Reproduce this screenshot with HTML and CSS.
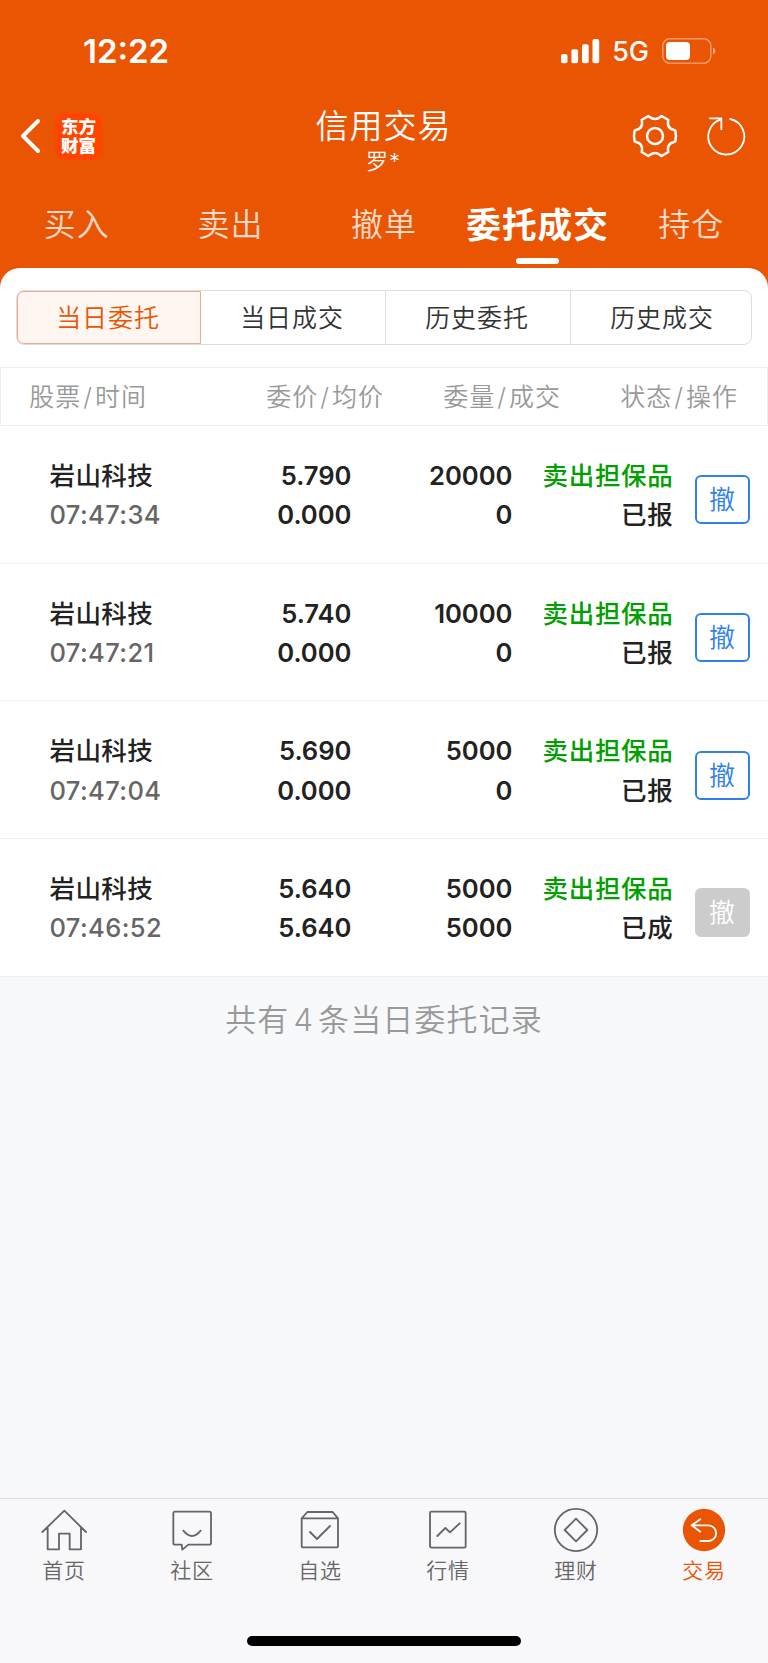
FILE: index.html
```
<!DOCTYPE html>
<html lang="zh-CN">
<head>
    <meta charset="UTF-8">
    <meta name="viewport" content="width=device-width, initial-scale=1.0">
    <title>信用交易</title>
    <link rel="stylesheet" href="styles.css">
</head>
<body>
    <div class="app">
        <header class="header">
            <div class="status-bar">
                <span class="clock">12:22</span>
                <div class="status-icons">
                    <svg class="signal" width="39" height="25" viewBox="0 0 39 25" fill="#fff">
                        <rect x="0" y="15" width="6.5" height="9.3" rx="2"/>
                        <rect x="10.4" y="10.3" width="6.7" height="14" rx="2"/>
                        <rect x="21" y="5.2" width="6.7" height="19" rx="2"/>
                        <rect x="31.5" y="0" width="6.7" height="24.3" rx="2"/>
                    </svg>
                    <span class="network">5G</span>
                    <svg class="battery" width="54" height="26" viewBox="0 0 54 26">
                        <rect x="0.8" y="0.8" width="48" height="24.4" rx="7" fill="none" stroke="#fff" stroke-opacity="0.4" stroke-width="1.5"/>
                        <rect x="4" y="4" width="24" height="18" rx="4" fill="#fff"/>
                        <path d="M51 9.5q5 3.5 0 7z" fill="#fff" fill-opacity="0.5"/>
                    </svg>
                </div>
            </div>

            <div class="nav">
                <div class="nav-left">
                    <svg width="22" height="36" viewBox="0 0 22 36" fill="none" stroke="#fff" stroke-width="4" stroke-linecap="round" stroke-linejoin="round"><path d="M18 3L3 18l15 15"/></svg>
                    <div class="logo">东方<br>财富</div>
                </div>
                <div class="nav-title">
                    <h1>信用交易</h1>
                    <p>罗*</p>
                </div>
                <div class="nav-right">
                    <svg width="46" height="46" viewBox="-69 -69 138 138" fill="none" stroke="#fff" stroke-width="7.5" stroke-linejoin="round">
                        <path d="M-20-60L-17-58Q0-44 17-58L20-60L40-48L39-44Q36-23 57-18L61-16Q65 0 61 16L57 18Q36 23 39 44L40 48L20 60L17 58Q0 44-17 58L-20 60L-40 48L-39 44Q-36 23-57 18L-61 16Q-65 0-61-16L-57-18Q-36-23-39-44L-40-48z"/>
                        <circle r="24"/>
                    </svg>
                    <svg width="42" height="42" viewBox="-63 -63 126 126" fill="none" stroke="#fff" stroke-width="5.5" stroke-linecap="round">
                        <path d="M13-51A54 54 0 1 1-15-50M-48-53H-14V-20"/>
                    </svg>
                </div>
            </div>

            <nav class="tabs">
                <a class="tab">买入</a>
                <a class="tab">卖出</a>
                <a class="tab">撤单</a>
                <a class="tab active">委托成交</a>
                <a class="tab">持仓</a>
            </nav>
        </header>

        <main class="sheet">
            <div class="segment">
                <div class="segment-item active">当日委托</div>
                <div class="segment-item">当日成交</div>
                <div class="segment-item">历史委托</div>
                <div class="segment-item">历史成交</div>
            </div>

            <div class="list-head">
                <span>股票<i>/</i>时间</span>
                <span>委价<i>/</i>均价</span>
                <span>委量<i>/</i>成交</span>
                <span>状态<i>/</i>操作</span>
            </div>

            <div class="order">
                <div class="stock">岩山科技<br><span class="time">07:47:34</span></div>
                <div class="num">5.790<br>0.000</div>
                <div class="num">20000<br>0</div>
                <div class="state"><span class="sell">卖出担保品</span><br>已报</div>
                <button class="cancel">撤</button>
            </div>
            <div class="order">
                <div class="stock">岩山科技<br><span class="time">07:47:21</span></div>
                <div class="num">5.740<br>0.000</div>
                <div class="num">10000<br>0</div>
                <div class="state"><span class="sell">卖出担保品</span><br>已报</div>
                <button class="cancel">撤</button>
            </div>
            <div class="order">
                <div class="stock">岩山科技<br><span class="time">07:47:04</span></div>
                <div class="num">5.690<br>0.000</div>
                <div class="num">5000<br>0</div>
                <div class="state"><span class="sell">卖出担保品</span><br>已报</div>
                <button class="cancel">撤</button>
            </div>
            <div class="order">
                <div class="stock">岩山科技<br><span class="time">07:46:52</span></div>
                <div class="num">5.640<br>5.640</div>
                <div class="num">5000<br>5000</div>
                <div class="state"><span class="sell">卖出担保品</span><br>已成</div>
                <button class="cancel disabled" disabled>撤</button>
            </div>
        </main>

        <p class="summary">共有<span>4</span>条当日委托记录</p>

        <footer class="footer">
            <div class="menu">
                <a class="menu-item">
                    <svg viewBox="0 0 138 138"><path d="M4 75L70 11l65 64M20 62V127H54V80H86V127H120V62"/></svg>
                    首页
                </a>
                <a class="menu-item">
                    <svg viewBox="0 0 138 138"><path d="M18 14H121q5 0 5 5V108q0 5-5 5H58L40 128 38 113H18q-5 0-5-5V19q0-5 5-5zM43 71Q69 103 95 71"/></svg>
                    社区
                </a>
                <a class="menu-item">
                    <svg viewBox="0 0 138 138"><path d="M14 34V116q0 5 5 5H118q5 0 5-5V34L107 15H31zH123M39 75L60 96 99 57"/></svg>
                    自选
                </a>
                <a class="menu-item">
                    <svg viewBox="0 0 138 138"><rect x="15" y="14" width="107" height="108" rx="4"/><path d="M37 87L61 63 75 76 104 49"/></svg>
                    行情
                </a>
                <a class="menu-item">
                    <svg viewBox="0 0 138 138"><circle cx="69" cy="69" r="63.5"/><path d="M69 35L103 69 69 103 35 69z"/></svg>
                    理财
                </a>
                <a class="menu-item active">
                    <svg viewBox="0 0 138 138"><circle class="disc" cx="69" cy="69" r="63.5"/><path d="M58 37L32 55 58 74M34 55H82a23.5 23.5 0 0 1 0 47H58"/></svg>
                    交易
                </a>
            </div>
            <div class="home-indicator"></div>
        </footer>
    </div>
</body>
</html>
```

FILE: styles.css
```
* {
    box-sizing: border-box;
    margin: 0;
    padding: 0;
}
body {
    font-family: Inter, "Noto Sans CJK SC", sans-serif;
    background: #f7f8fa;
    color: #222;
}
.app {
    width: 768px;
    height: 1663px;
    display: flex;
    flex-direction: column;
    background: #f7f8fa;
    overflow: hidden;
}
svg {
    display: block;
    flex: none;
}

/* 顶部 */
.header {
    height: 292px;
    flex: none;
    background: #ea5504;
    color: #fff;
}
.status-bar {
    height: 102px;
    display: flex;
    align-items: center;
    justify-content: space-between;
    padding: 0 52px 0 83px;
}
.clock {
    font-size: 33px;
    font-weight: 600;
}
.status-icons {
    display: flex;
    align-items: center;
}
.network {
    font-size: 27px;
    font-weight: 500;
    line-height: 30px;
    margin: 2px 13px 0 12px;
}
.nav {
    height: 68px;
    display: grid;
    grid-template-columns: 1fr 200px 1fr;
    grid-template-rows: 68px;
    align-items: center;
    padding: 0 21px 0 20px;
}
.nav-left,
.nav-right {
    display: flex;
    align-items: center;
}
.nav-left {
    gap: 13px;
}
.nav-right {
    justify-content: flex-end;
    gap: 27px;
}
.logo {
    width: 47px;
    height: 47px;
    padding-top: 4px;
    border-radius: 10px;
    background: #ff4400;
    font-size: 17.5px;
    font-weight: 900;
    line-height: 19.5px;
    text-align: center;
}
.nav-title {
    text-align: center;
    padding-top: 10px;
}
.nav-title h1 {
    font-family: "Noto Sans CJK SC", sans-serif;
    font-size: 33px;
    font-weight: 350;
    line-height: 40px;
    letter-spacing: 1px;
}
.nav-title p {
    font-size: 22px;
    font-weight: 350;
    line-height: 34px;
    letter-spacing: 1px;
}
.tabs {
    height: 98px;
    display: grid;
    grid-template-columns: repeat(5, 1fr);
}
.tab {
    display: flex;
    flex-direction: column;
    align-items: center;
    padding-top: 31px;
    font-size: 32px;
    font-weight: 350;
    line-height: 48px;
    letter-spacing: 1px;
    color: rgba(255,255,255,0.8);
    white-space: nowrap;
}
.tab.active {
    color: #fff;
    font-size: 34.7px;
    font-weight: 700;
}
.tab.active::after {
    content: "";
    width: 43px;
    height: 6px;
    margin-top: 9px;
    border-radius: 3px;
    background: #fff;
}

/* 委托列表 */
.sheet {
    flex: none;
    margin-top: -24px;
    padding-top: 22px;
    background: #fff;
    border-radius: 20px 20px 0 0;
}
.segment {
    height: 55px;
    margin: 0 16px;
    display: grid;
    grid-template-columns: 184px 185px 185px 1fr;
    border: 1px solid #dcdfe6;
    border-radius: 8px;
}
.segment-item {
    display: flex;
    align-items: center;
    justify-content: center;
    padding: 0 2px 3px 0;
    font-size: 25px;
    letter-spacing: 0.9px;
    font-weight: 350;
    color: #333;
    border-right: 1px solid #dcdfe6;
}
.segment-item:last-child {
    border-right: none;
    padding: 0 0 3px 2px;
}
.segment-item.active {
    color: #ea5504;
    background: #fff5f1;
    border: 1px solid #f2a988;
    border-radius: 7px 0 0 7px;
}
.list-head {
    height: 59px;
    margin-top: 22px;
    padding-bottom: 4px;
    display: grid;
    grid-template-columns: 146px 237px 177px 177px;
    align-items: center;
    border: 1px solid #eee;
    font-size: 25px;
    font-weight: 350;
    letter-spacing: 1px;
    color: #999;
    text-align: right;
}
.list-head i {
    font-style: normal;
    margin: 0 2px;
}
.order {
    height: 137.7px;
    display: grid;
    grid-template-columns: 150px 152px 161px 161px 76px;
    align-items: center;
    padding: 2px 0 0 49.5px;
    border-bottom: 1px solid #f2f2f2;
    font-size: 25.5px;
    font-weight: 500;
    line-height: 39.3px;
    text-align: right;
}
.stock {
    text-align: left;
    letter-spacing: 0.4px;
}
.time {
    color: #666;
    font-weight: 550;
}
.num {
    font-size: 25.6px;
    font-weight: 600;
}
.state {
    letter-spacing: 0.7px;
}
.sell {
    color: #00a000;
}
.cancel {
    height: 49px;
    width: 55px;
    margin: 9px 0 0 21px;
    padding-bottom: 3px;
    border: 2px solid #2f80ed;
    border-radius: 6px;
    background: #fff;
    color: #2f80ed;
    font: 350 26px/42px "Noto Sans CJK SC", sans-serif;
}
.cancel.disabled {
    border-color: #ccc;
    background: #ccc;
    color: #fff;
}
.summary {
    flex: 1;
    padding-top: 19px;
    font-size: 31px;
    font-weight: 350;
    line-height: 48px;
    letter-spacing: 1.1px;
    color: #999;
    text-align: center;
}
.summary span {
    margin: 0 4px;
}

/* 底部菜单 */
.footer {
    height: 165px;
    flex: none;
    display: flex;
    flex-direction: column;
    justify-content: space-between;
    padding: 8px 0 17px;
    border-top: 1px solid #dedee0;
    background: #f8f8fb;
}
.menu {
    display: grid;
    grid-template-columns: repeat(6, 1fr);
}
.menu-item {
    display: flex;
    flex-direction: column;
    align-items: center;
    font-size: 21px;
    font-weight: 350;
    line-height: 36px;
    letter-spacing: 0.8px;
    color: #666;
}
.menu-item svg {
    width: 46px;
    height: 46px;
    fill: none;
    stroke: #666;
    stroke-width: 5.5;
    stroke-linecap: round;
    stroke-linejoin: round;
}
.menu-item.active {
    color: #ea5504;
}
.menu-item.active svg {
    stroke: #fff;
}
.menu-item .disc {
    fill: #ea5504;
    stroke: none;
}
.home-indicator {
    width: 274px;
    height: 10px;
    margin: 0 auto;
    border-radius: 5px;
    background: #000;
}
```
